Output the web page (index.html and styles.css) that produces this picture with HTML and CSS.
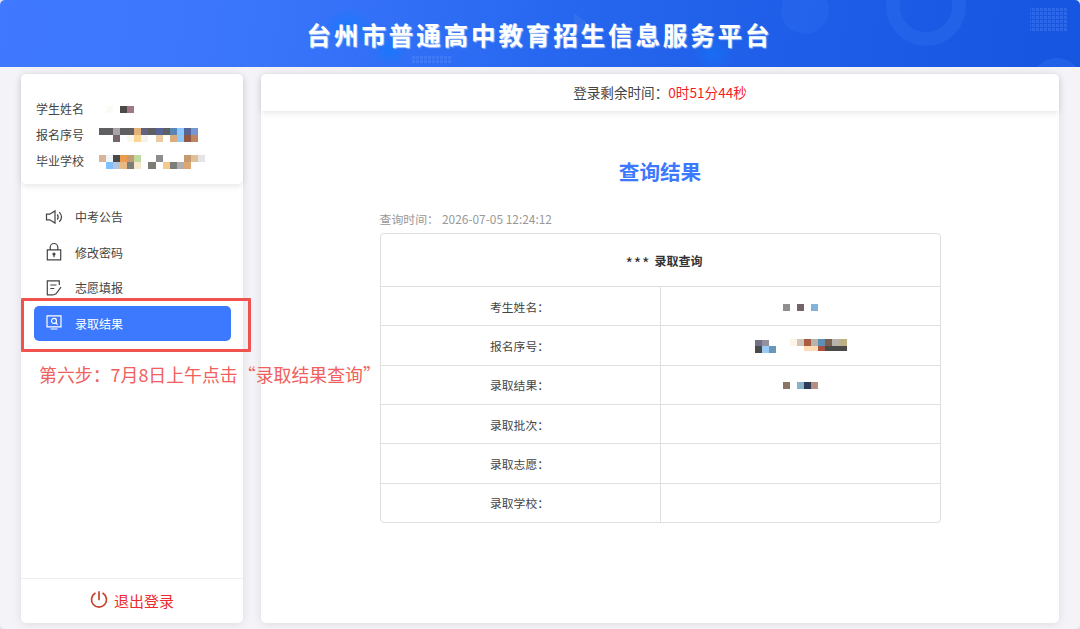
FILE: index.html
```html
<!DOCTYPE html>
<html lang="zh-CN">
<head>
    <meta charset="UTF-8">
    <meta name="viewport" content="width=device-width, initial-scale=1.0">
    <title>台州市普通高中教育招生信息服务平台</title>
    <link rel="stylesheet" href="styles.css">
</head>
<body>
    <div class="page">
        <header class="header">
            <svg class="header-bg" width="1080" height="67" viewBox="0 0 1080 67">
                <defs>
                    <pattern id="dots" width="4" height="4" patternUnits="userSpaceOnUse">
                        <rect width="3" height="3" fill="#6f9cff"/>
                    </pattern>
                    <radialGradient id="glow">
                        <stop offset="0" stop-color="#0d7bff" stop-opacity="0.65"/>
                        <stop offset="1" stop-color="#0d7bff" stop-opacity="0"/>
                    </radialGradient>
                </defs>
                <ellipse cx="348" cy="28" rx="26" ry="20" fill="url(#glow)"/>
                <ellipse cx="390" cy="50" rx="18" ry="16" fill="url(#glow)"/>
                <ellipse cx="713" cy="54" rx="20" ry="18" fill="url(#glow)" opacity="0.7"/>
                <path d="M574 13l16 12v12l-16-8z" fill="#fff" opacity="0.06"/>
                <circle cx="805" cy="10" r="24" fill="#4f8cff" opacity="0.12"/>
                <circle cx="926" cy="6" r="33" fill="none" stroke="#4f8cff" stroke-width="14" opacity="0.17"/>
                <circle cx="1057" cy="84" r="26" fill="#4f8cff" opacity="0.2"/>
                <rect x="1030" y="8" width="38" height="24" fill="url(#dots)" opacity="0.25"/>
                <rect x="412" y="56" width="39" height="8" fill="url(#dots)" opacity="0.25"/>
            </svg>
            <h1>台州市普通高中教育招生信息服务平台</h1>
        </header>

        <div class="container">
            <aside class="sidebar">
                <div class="user-info">
                    <div class="user-row">
                        <span>学生姓名</span>
                        <svg class="mosaic" width="106" height="14" viewBox="0 0 15 2" preserveAspectRatio="none" shape-rendering="crispEdges">
                            <path fill="#fbfaf5" d="M1 .5h1v1h-1z"/>
                            <path fill="#4d4949" d="M3 .5h1v1h-1z"/>
                            <path fill="#9f7984" d="M4 .5h1v1h-1z"/>
                        </svg>
                    </div>
                    <div class="user-row">
                        <span>报名序号</span>
                        <svg class="mosaic" width="106" height="14" viewBox="0 0 15 2" preserveAspectRatio="none" shape-rendering="crispEdges">
                            <path fill="#5f5f61" d="M0 0h2v1h-2zM3 0h2v1h-2zM7 0h1v1h-1zM9 0h1v1h-1z"/>
                            <path fill="#a8a3a6" d="M2 0h1v1h-1z"/>
                            <path fill="#e3b078" d="M5 0h1v1h-1z"/>
                            <path fill="#655f80" d="M6 0h1v1h-1z"/>
                            <path fill="#566498" d="M8 0h1v1h-1zM12 0h1v1h-1z"/>
                            <path fill="#5a86b5" d="M10 0h1v1h-1z"/>
                            <path fill="#8cc8ff" d="M11 0h1v2h-1z"/>
                            <path fill="#7797cf" d="M13 0h1v1h-1z"/>
                            <path fill="#75656d" d="M2 1h1v1h-1z"/>
                            <path fill="#fdf8ec" d="M4 1h1v1h-1z"/>
                            <path fill="#fbd692" d="M5 1h1v1h-1z"/>
                            <path fill="#f6f3ef" d="M6 1h1v1h-1z"/>
                            <path fill="#ecca9f" d="M8 1h1v1h-1z"/>
                            <path fill="#dcab7a" d="M10 1h1v1h-1z"/>
                            <path fill="#935743" d="M12 1h1v1h-1z"/>
                            <path fill="#c08560" d="M13 1h1v1h-1z"/>
                        </svg>
                    </div>
                    <div class="user-row">
                        <span>毕业学校</span>
                        <svg class="mosaic mosaic-school" width="106" height="14" viewBox="0 0 15 2" preserveAspectRatio="none" shape-rendering="crispEdges">
                            <path fill="#d9b497" d="M0 0h1v1h-1z"/>
                            <path fill="#edf5fa" d="M1 0h1v1h-1z"/>
                            <path fill="#484846" d="M2 0h1v1h-1z"/>
                            <path fill="#eb9c4f" d="M3 0h1v1h-1z"/>
                            <path fill="#c79b72" d="M4 0h1v1h-1zM12 0h1v1h-1z"/>
                            <path fill="#bfdba0" d="M5 0h1v1h-1z"/>
                            <path fill="#8b8d90" d="M8 0h1v1h-1z"/>
                            <path fill="#e1bf98" d="M13 0h1v1h-1z"/>
                            <path fill="#e4e4e4" d="M14 0h1v1h-1z"/>
                            <path fill="#80c0ff" d="M1 1h1v1h-1z"/>
                            <path fill="#b3c5dc" d="M2 1h1v1h-1z"/>
                            <path fill="#e8b887" d="M3 1h1v1h-1z"/>
                            <path fill="#7c7d76" d="M4 1h1v1h-1zM7 1h1v1h-1zM10 1h1v1h-1z"/>
                            <path fill="#f9e7cd" d="M5 1h1v1h-1z"/>
                            <path fill="#f5ca90" d="M9 1h1v1h-1z"/>
                            <path fill="#b0aeb0" d="M11 1h1v1h-1z"/>
                            <path fill="#dba872" d="M12 1h1v1h-1z"/>
                        </svg>
                    </div>
                </div>

                <nav class="menu">
                    <a class="menu-item">
                        <svg class="icon" viewBox="0 0 16 16">
                            <path d="M.5 5.200h3.300L9 1.900v12.200L3.800 10.800H.5z"/>
                            <path d="M11.300 5.300q1.800 2.700 0 5.400M13.300 3.200q4.400 4.800 0 9.600"/>
                        </svg>
                        <span>中考公告</span>
                    </a>
                    <a class="menu-item">
                        <svg class="icon" viewBox="0 0 16 16">
                            <path d="M1.300 5.800h13.400v10H1.300zM4.200 5.800V3.300a3.800 3.800 0 0 1 7.600 0v2.500M8 10.500v2.700"/>
                            <circle cx="8" cy="10" r="1" fill="currentColor"/>
                        </svg>
                        <span>修改密码</span>
                    </a>
                    <a class="menu-item">
                        <svg class="icon" viewBox="0 0 16 16">
                            <path d="M13.300 5V.9H1.300v13.900h6.200M4.300 5h6.200M4.300 8.500h4M15 7.200l-5 6.600-2.300 1"/>
                        </svg>
                        <span>志愿填报</span>
                    </a>
                    <a class="menu-item active">
                        <svg class="icon" viewBox="0 0 16 16">
                            <path d="M1 .9h14v11H1zM4.500 14h7M9.800 7.700l1.800 1.900"/>
                            <circle cx="8" cy="5.900" r="2.500"/>
                        </svg>
                        <span>录取结果</span>
                    </a>
                </nav>

                <a class="logout">
                    <svg class="power" viewBox="0 0 18 18">
                        <path d="M5 2.300a7.500 7.500 0 1 0 8 0M9 .9v7.500"/>
                    </svg>
                    <span>退出登录</span>
                </a>
            </aside>

            <main class="main">
                <div class="timer">登录剩余时间：<span class="time-left">0时51分44秒</span></div>
                <div class="result">
                    <h2>查询结果</h2>
                    <p class="query-time">查询时间：<span>2026-07-05 12:24:12</span></p>
                    <div class="result-table">
                        <div class="table-title"><span class="stars">***</span>录取查询</div>
                        <div class="table-row">
                            <div class="cell">考生姓名：</div>
                            <div class="cell">
                                <svg class="cell-mosaic" width="94" height="14" shape-rendering="crispEdges">
                                    <path fill="#8f8f8d" d="M29 5h7v7h-7z"/>
                                    <path fill="#75636a" d="M43 5h7v7h-7z"/>
                                    <path fill="#82b3da" d="M57 5h7v7h-7z"/>
                                </svg>
                            </div>
                        </div>
                        <div class="table-row">
                            <div class="cell">报名序号：</div>
                            <div class="cell">
                                <svg class="cell-mosaic" width="94" height="14" shape-rendering="crispEdges">
                                    <path fill="#717187" d="M1 1h7v6h-7z"/>
                                    <path fill="#958fa0" d="M8 1h7v6h-7z"/>
                                    <path fill="#4a4a4a" d="M1 7h7v7h-7z"/>
                                    <path fill="#98cbf5" d="M8 7h7v7h-7z"/>
                                    <path fill="#6797b9" d="M15 7h7v7h-7z"/>
                                    <path fill="#fdf3e6" d="M36 0h7v7h-7z"/>
                                    <path fill="#cfc5b8" d="M43 0h7v7h-7z"/>
                                    <path fill="#aa5c40" d="M50 0h7v7h-7z"/>
                                    <path fill="#b8b3ad" d="M57 0h7v7h-7zM78 0h7v7h-7z"/>
                                    <path fill="#5e8fb3" d="M64 0h7v7h-7z"/>
                                    <path fill="#7b604f" d="M71 0h7v7h-7z"/>
                                    <path fill="#bdb083" d="M85 0h8v7h-8z"/>
                                    <path fill="#ffdcb5" d="M50 7h14v5h-14z"/>
                                    <path fill="#a65240" d="M64 7h7v5h-7z"/>
                                    <path fill="#4b4a48" d="M71 7h22v5h-22z"/>
                                </svg>
                            </div>
                        </div>
                        <div class="table-row">
                            <div class="cell">录取结果：</div>
                            <div class="cell">
                                <svg class="cell-mosaic" width="94" height="14" shape-rendering="crispEdges">
                                    <path fill="#8b7564" d="M29 4h7v7h-7z"/>
                                    <path fill="#88b1ca" d="M43 4h7v7h-7z"/>
                                    <path fill="#2d3b57" d="M50 4h7v7h-7z"/>
                                    <path fill="#b48e80" d="M57 4h7v7h-7z"/>
                                </svg>
                            </div>
                        </div>
                        <div class="table-row">
                            <div class="cell">录取批次：</div>
                            <div class="cell"></div>
                        </div>
                        <div class="table-row">
                            <div class="cell">录取志愿：</div>
                            <div class="cell"></div>
                        </div>
                        <div class="table-row">
                            <div class="cell">录取学校：</div>
                            <div class="cell"></div>
                        </div>
                    </div>
                </div>
            </main>
        </div>

        <!-- Step marker over the menu -->
        <div class="step-box"></div>
        <div class="step-text">第六步：7月8日上午点击“录取结果查询”</div>
    </div>
</body>
</html>
```
FILE: styles.css
```css
* {
    box-sizing: border-box;
}
body {
    margin: 0;
    font-family: 'Noto Sans CJK SC', sans-serif;
    font-size: 12px;
    color: #444;
    background-color: #dfe4ee;
}
h1, h2, p {
    margin: 0;
}
.page {
    position: relative;
    display: flex;
    flex-direction: column;
    width: 1080px;
    height: 629px;
    overflow: hidden;
    border-radius: 5px;
    background-color: #f4f4f8;
}
.header {
    position: relative;
    height: 66.5px;
    flex-shrink: 0;
    overflow: hidden;
    background: linear-gradient(100deg, #4079ff 0%, #3975fb 25%, #2868f0 50%, #1d5de7 75%, #1555e0 100%);
}
.header-bg {
    position: absolute;
    top: 0;
    left: 0;
}
.header h1 {
    position: relative;
    padding-right: 1px;
    text-align: center;
    color: #fff;
    font-size: 24.5px;
    line-height: 69px;
    letter-spacing: 2.9px;
    text-shadow: 1px 1px 1px rgba(255, 255, 255, 0.6);
}
.container {
    display: flex;
    flex: 1;
    gap: 18px;
    padding: 7px 21px 6px;
}

/* Sidebar */
.sidebar {
    display: flex;
    flex-direction: column;
    width: 222px;
    border-radius: 5px;
    background-color: #fff;
    box-shadow: 0 1px 10px rgba(0, 0, 0, 0.1);
}
.user-info {
    height: 110px;
    padding: 22px 15px 0;
    border-radius: 5px;
    box-shadow: 0 2px 6px rgba(0, 0, 0, 0.1);
}
.user-row {
    display: flex;
    align-items: center;
    gap: 15px;
    height: 26px;
    white-space: nowrap;
}
.mosaic {
    flex-shrink: 0;
}
.mosaic-school {
    margin-top: 2px;
}
.menu {
    flex: 1;
    padding: 15.5px 12px 0 13px;
}
.menu-item {
    display: flex;
    align-items: center;
    gap: 13px;
    height: 35.5px;
    padding-left: 12px;
    border-radius: 5px;
}
.menu-item.active {
    color: #fff;
    background-color: #3d79fe;
}
.icon {
    width: 16px;
    height: 16px;
    overflow: visible;
    fill: none;
    stroke: currentColor;
    stroke-width: 1.2;
}
.logout {
    display: flex;
    align-items: center;
    justify-content: center;
    gap: 6px;
    height: 45px;
    padding-bottom: 2px;
    border-top: 1px solid #eee;
    color: #ee2a2f;
    font-size: 15px;
}
.power {
    width: 18px;
    height: 18px;
    fill: none;
    stroke: #c8402e;
    stroke-width: 1.7;
    stroke-linecap: round;
}

/* Main area */
.main {
    flex: 1;
    border-radius: 5px;
    background-color: #fff;
    box-shadow: 0 1px 10px rgba(0, 0, 0, 0.1);
}
.timer {
    height: 37.5px;
    border-radius: 5px 5px 0 0;
    box-shadow: 0 2px 6px rgba(0, 0, 0, 0.1);
    text-align: center;
    font-size: 13.6px;
    line-height: 37px;
}
.time-left {
    color: #f91c1c;
}
.result {
    width: 561px;
    margin: 0 auto;
    padding-top: 45px;
}
.result h2 {
    text-align: center;
    color: #3d79fe;
    font-size: 20.6px;
    line-height: 30px;
}
.query-time {
    margin-top: 23px;
    color: #999;
    font-size: 11.9px;
    line-height: 20px;
}
.query-time span {
    margin-left: 3px;
}
.result-table {
    margin-top: 4px;
    border: 1px solid #dfdfdf;
    border-radius: 4px;
}
.table-title {
    height: 52px;
    padding-left: 8px;
    text-align: center;
    color: #333;
    font-weight: bold;
    line-height: 53px;
}
.stars {
    margin-right: 4px;
    font-size: 16px;
    font-weight: normal;
    line-height: 1;
    letter-spacing: 0.8px;
    vertical-align: -4px;
}
.table-row {
    display: flex;
    height: 39.35px;
    border-top: 1px solid #dfdfdf;
}
.cell {
    display: flex;
    align-items: center;
    justify-content: center;
    flex: 1;
    font-size: 11.8px;
}
.cell:first-child {
    padding-right: 1px;
}
.cell + .cell {
    padding-left: 1px;
    border-left: 1px solid #dfdfdf;
}
.cell-mosaic {
    display: block;
}

/* Step marker */
.step-box {
    position: absolute;
    top: 298px;
    left: 21px;
    width: 230px;
    height: 54px;
    border: 3px solid #f0524f;
    border-radius: 1px;
}
.step-text {
    position: absolute;
    top: 361px;
    left: 39px;
    color: #f0605c;
    font-size: 17.9px;
    line-height: 26px;
    white-space: nowrap;
}
```
